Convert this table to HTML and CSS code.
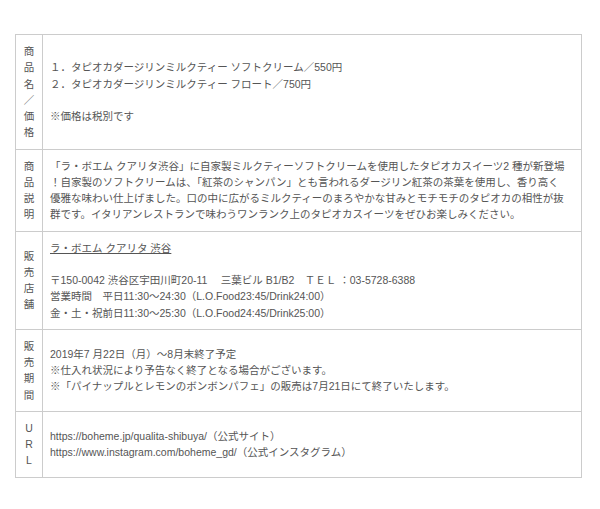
FILE: index.html
```html
<!DOCTYPE html>
<html lang="ja">
<head>
<meta charset="utf-8">
<title>商品概要</title>
<link rel="stylesheet" href="styles.css">
</head>
<body>

<div class="wrap">
<table class="spec">
	<tr>
		<td class="label">商<br>品<br>名<br>／<br>価<br>格</td>
		<td class="body">
			<br>
			１．タピオカダージリンミルクティー ソフトクリーム／550円<br>
			２．タピオカダージリンミルクティー フロート／750円<br>
			<br>
			※価格は税別です<br>
			<br>
		</td>
	</tr>
	<tr>
		<td class="label">商<br>品<br>説<br>明</td>
		<td class="body">
			「ラ・ボエム クアリタ渋谷」に自家製ミルクティーソフトクリームを使用したタピオカスイーツ2 種が新登場<br>
			！自家製のソフトクリームは、「紅茶のシャンパン」とも言われるダージリン紅茶の茶葉を使用し、香り高く<br>
			優雅な味わい仕上げました。口の中に広がるミルクティーのまろやかな甘みとモチモチのタピオカの相性が抜<br>
			群です。イタリアンレストランで味わうワンランク上のタピオカスイーツをぜひお楽しみください。
		</td>
	</tr>
	<tr>
		<td class="label">販<br>売<br>店<br>舗</td>
		<td class="body">
			<a href="#">ラ・ボエム クアリタ 渋谷</a><br>
			<br>
			〒150-0042 渋谷区宇田川町20-11　 三葉ビル B1/B2　ＴＥＬ ：03-5728-6388<br>
			営業時間　平日11:30～24:30（L.O.Food23:45/Drink24:00）<br>
			金・土・祝前日11:30～25:30（L.O.Food24:45/Drink25:00）
		</td>
	</tr>
	<tr>
		<td class="label">販<br>売<br>期<br>間</td>
		<td class="body">
			2019年7 月22日（月）～8月末終了予定<br>
			※仕入れ状況により予告なく終了となる場合がございます。<br>
			※「パイナップルとレモンのボンボンパフェ」の販売は7月21日にて終了いたします。
		</td>
	</tr>
	<tr>
		<td class="label">U<br>R<br>L</td>
		<td class="body">
			https://boheme.jp/qualita-shibuya/（公式サイト）<br>
			https://www.instagram.com/boheme_gd/（公式インスタグラム）
		</td>
	</tr>
</table>
</div><!-- end wrap -->

</body>
</html>
```

FILE: styles.css
```css
body {
margin: 0;
background: #fff;
font-family: "Liberation Sans", "Noto Sans CJK JP", sans-serif;
font-size: 10.5px;
line-height: 16.25px;
color: #555;
}

.wrap {
padding: 34px 0 0 15px;
}

.spec {
border-collapse: collapse;
width: 567px;
}

.spec td {
border: 1px solid #ccc;
padding: 8px 7px;
vertical-align: middle;
}

.spec .label {
width: 26px;
padding: 8px 0;
text-align: center;
}

.spec .body {
white-space: nowrap;
}

.spec a {
color: #555;
text-decoration: underline;
}
```
